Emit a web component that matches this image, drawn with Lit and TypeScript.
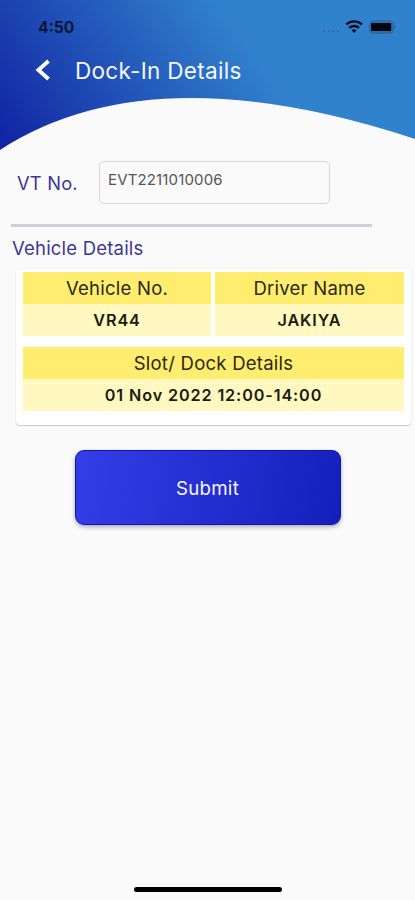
import { LitElement, html, css } from "lit";
import { customElement, property } from "lit/decorators.js";

@customElement("detail-cell")
class DetailCell extends LitElement {
  @property() label = "";
  @property() value = "";
  static styles = css`
    :host { display: block; text-align: center; color: #1c1b10; }
    .label { height: 32px; line-height: 32px; background: #feed6f; font-size: 18.5px; letter-spacing: 0.25px; color: #2b2813; }
    .value { height: 32px; line-height: 33px; background: #fff8c1; font-size: 16.2px; font-weight: 600; letter-spacing: 0.88px; }
  `;
  render() {
    return html`<div class="label">${this.label}</div><div class="value">${this.value}</div>`;
  }
}

@customElement("app-root")
class AppRoot extends LitElement {
  static styles = css`
    :host { display: block; font-family: Inter, "Liberation Sans", sans-serif; }
    * { box-sizing: border-box; }
    .screen { position: relative; height: 900px; overflow: hidden; background: #fafafa; display: flex; flex-direction: column; }
    .backdrop { position: absolute; left: 0; top: 0; }
    .status { position: relative; height: 54px; padding: 0 18px 0 38px; display: flex; align-items: center; justify-content: space-between; }
    .time { font-size: 16px; font-weight: 600; color: #07122e; letter-spacing: 0; }
    .indicators { display: block; }
    .nav { position: relative; height: 32px; padding-left: 34px; display: flex; align-items: center; }
    .title { margin-left: 24px; color: #f4f7ff; font-size: 22.5px; letter-spacing: 0.3px; }
    .vt { margin-top: 75px; padding-left: 17px; height: 43px; display: flex; align-items: center; }
    .vt-label { width: 82px; font-size: 18.3px; letter-spacing: 0.2px; color: #3b3795; }
    .field { width: 231px; height: 43px; border: 1px solid #d8d8d8; border-radius: 5px; padding: 8px; font-size: 15px; line-height: 19px; color: #555; letter-spacing: 0.15px; }
    .rule { margin: 20px 0 0 11px; width: 361px; height: 3px; background: #cfcedb; flex: none; }
    .heading { margin: 11px 0 0 12px; height: 22px; line-height: 21px; font-size: 18.5px; letter-spacing: 0.2px; color: #3b3795; }
    .card { margin: 9px 4px 0 16px; height: 156px; padding: 3px 7px; background: #fff; border-radius: 4px; box-shadow: 0 1px 1px rgba(0,0,0,.18), 0 0 2px rgba(0,0,0,.08); display: flex; flex-direction: column; gap: 11px; }
    .pair { display: grid; grid-template-columns: 188px 1fr; gap: 4px; }
    .submit { align-self: center; margin: 25px 0 0 0; padding: 2px 0 0; width: 266px; height: 75px; border: 1px solid #0e12b4; border-radius: 9px; background: linear-gradient(100deg, #333ee8, #1420ba); color: #f4f5ff; font: 18.7px Inter, sans-serif; letter-spacing: 0.25px; box-shadow: 0 2px 4px rgba(0,0,0,.32); }
    .home { margin: auto auto 8px; width: 148px; height: 5px; border-radius: 3px; background: #000; }
  `;
  render() {
    return html`<main class="screen">
      <svg class="backdrop" width="415" height="152" viewBox="0 0 415 152">
        <defs><linearGradient id="sky" gradientUnits="userSpaceOnUse" x1="0" y1="150" x2="217" y2="-1">
          <stop offset="0" stop-color="#1122a2"/><stop offset="1" stop-color="#3182cd"/>
        </linearGradient></defs>
        <path fill="url(#sky)" d="M0 0H415V139Q151 52 0 150Z"/>
      </svg>
      <div class="status">
        <span class="time">4:50</span>
        <svg class="indicators" width="76" height="16" viewBox="0 0 76 16">
          <g fill="#2868a6"><circle cx="3" cy="12.3" r="1"/><circle cx="8" cy="12.3" r="1"/><circle cx="12.5" cy="12.3" r="1"/><circle cx="17" cy="12.3" r="1"/></g>
          <g fill="none" stroke="#04101f" stroke-width="2.4"><path d="M25.3 5.4A11.5 11.5 0 0 1 40.9 5.4"/><path d="M28.2 8.9A7.2 7.2 0 0 1 38 8.9"/></g>
          <path fill="#04101f" d="M30.6 11.2Q33.1 9.2 35.6 11.2L33.1 13.9Z"/>
          <rect x="48.5" y="1.9" width="24" height="12.3" rx="3.5" fill="#2e6fad" stroke="#2a659f"/>
          <rect x="50" y="4" width="20.2" height="8" rx="1" fill="#000610"/>
          <path d="M73.7 6Q76 8 73.7 10Z" fill="#2a659f"/>
        </svg>
      </div>
      <div class="nav">
        <svg width="17" height="22" viewBox="0 0 17 22"><path d="M14.5 2L4.4 11L14.5 20" fill="none" stroke="#fff" stroke-width="3.8"/></svg>
        <span class="title">Dock-In Details</span>
      </div>
      <div class="vt"><span class="vt-label">VT No.</span><div class="field">EVT2211010006</div></div>
      <div class="rule"></div>
      <div class="heading">Vehicle Details</div>
      <section class="card">
        <div class="pair">
          <detail-cell label="Vehicle No." value="VR44"></detail-cell>
          <detail-cell label="Driver Name" value="JAKIYA"></detail-cell>
        </div>
        <detail-cell label="Slot/ Dock Details" value="01 Nov 2022 12:00-14:00"></detail-cell>
      </section>
      <button class="submit">Submit</button>
      <div class="home"></div>
    </main>`;
  }
}
